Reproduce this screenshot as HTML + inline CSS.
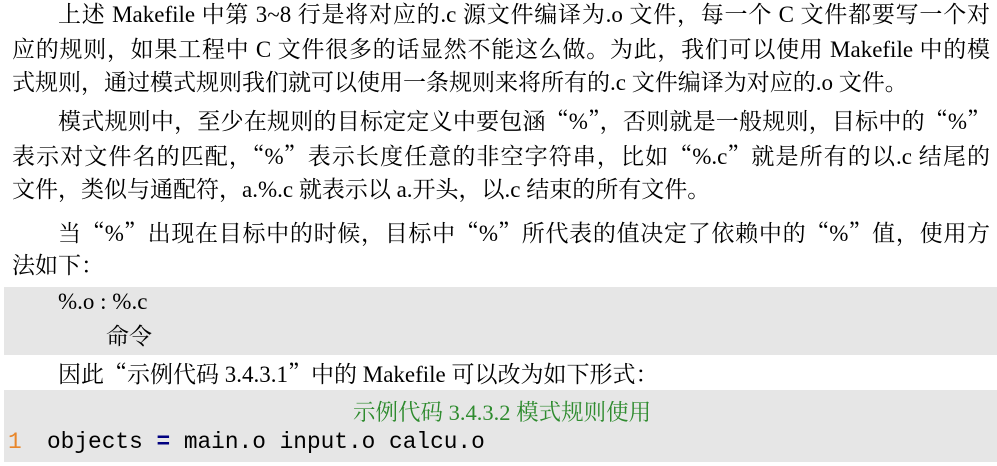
<!DOCTYPE html>
<html><head><meta charset="utf-8"><style>
body{margin:0;width:997px;height:466px;background:#fff;position:relative;overflow:hidden;font-family:"Liberation Serif","Noto Serif CJK SC",serif;font-size:23px;color:#000}
.l{position:absolute;left:12px;width:978px;white-space:nowrap;line-height:24px;text-align:justify;text-align-last:justify}
.s{text-align-last:left}
.i{left:58px;width:932px}
.g{position:absolute;left:4px;width:993px;background:#e6e6e6}
.m{font-family:"Liberation Mono",monospace;font-size:22.8px}
q{quotes:none;font-family:"Noto Serif CJK SC",serif}
q:before,q:after{content:none}
</style></head><body>
<div class="l i" style="top:3px">上述 Makefile 中第 3~8 行是将对应的.c 源文件编译为.o 文件，每一个 C 文件都要写一个对</div>
<div class="l" style="top:38px">应的规则，如果工程中 C 文件很多的话显然不能这么做。为此，我们可以使用 Makefile 中的模</div>
<div class="l s" style="top:71px">式规则，通过模式规则我们就可以使用一条规则来将所有的.c 文件编译为对应的.o 文件。</div>
<div class="l i" style="top:108px">模式规则中，至少在规则的目标定定义中要包涵<q>“</q>%<q>”</q>，否则就是一般规则，目标中的<q>“</q>%<q>”</q></div>
<div class="l" style="top:143px">表示对文件名的匹配，<q>“</q>%<q>”</q>表示长度任意的非空字符串，比如<q>“</q>%.c<q>”</q>就是所有的以.c 结尾的</div>
<div class="l s" style="top:178px">文件，类似与通配符，a.%.c 就表示以 a.开头，以.c 结束的所有文件。</div>
<div class="l i" style="top:220px">当<q>“</q>%<q>”</q>出现在目标中的时候，目标中<q>“</q>%<q>”</q>所代表的值决定了依赖中的<q>“</q>%<q>”</q>值，使用方</div>
<div class="l s" style="top:254px">法如下：</div>
<div class="g" style="top:287px;height:68px"></div>
<div class="l s" style="top:290px;left:58px">%.o : %.c</div>
<div class="l s" style="top:325px;left:106px">命令</div>
<div class="l s i" style="top:361px">因此<q>“</q>示例代码 3.4.3.1<q>”</q>中的 Makefile 可以改为如下形式：</div>
<div class="g" style="top:390px;height:72px"></div>
<div style="position:absolute;top:395px;left:353px;color:#2e8b2e;font-size:22.5px;font-family:'Liberation Serif','Noto Serif CJK SC',serif;white-space:nowrap">示例代码 3.4.3.2 模式规则使用</div>
<div class="m" style="position:absolute;top:429px;left:8px;color:#e8862a">1</div>
<div class="m" style="position:absolute;top:429px;left:47px">objects <span style="color:#000080;font-weight:bold">=</span> main.o input.o calcu.o</div>
</body></html>
